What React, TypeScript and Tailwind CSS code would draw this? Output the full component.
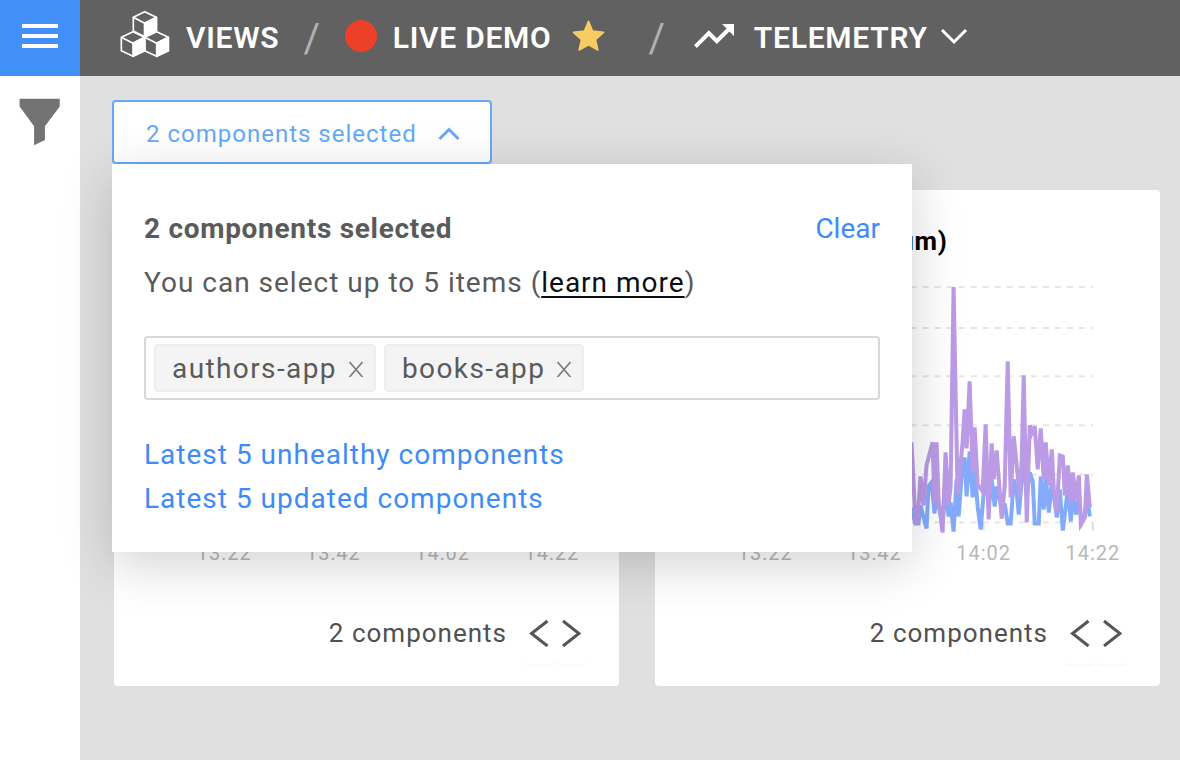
import { MdTrendingUp } from "react-icons/md";

const TAGS = ["authors-app", "books-app"];

const GRID_LINES = [18, 59, 107, 156, 205, 253];

const TICKS = [
  { x: 110, label: "13:22" },
  { x: 219, label: "13:42" },
  { x: 328, label: "14:02" },
  { x: 437, label: "14:22" },
];

const PURPLE =
  "44,240 52,205 60,248 70,190 80,236 92,176 100,250 112,200 124,246 136,184 148,230 160,204 172,250 186,190 200,240 214,196 228,246 240,182 250,230 256,173 260,253 262,253 265,207 268,236 271,196 277,173 279,235 281,173 283,230 287,263 290,183 293,236 295,217 298,18 302,225 307,173 309,140 311,179 314,112 317,203 319,158 322,215 327,222 330,155 333,250 336,174 338,210 341,181 346,249 349,217 352,92 355,228 358,167 361,196 364,228 366,190 368,106 371,253 374,156 376,164 379,157 382,200 385,159 388,210 390,173 393,216 396,180 398,220 401,243 404,186 407,187 409,226 412,196 415,233 417,203 420,230 423,206 425,255 429,248 431,205 434,238";

const BLUE =
  "44,250 60,240 76,252 92,236 108,253 124,238 140,250 156,230 172,253 188,240 204,250 220,236 236,252 250,230 256,240 260,254 263,254 265,236 271,259 273,217 276,213 279,244 281,213 283,237 287,253 290,217 293,247 295,233 298,262 301,210 303,247 306,207 309,188 311,227 314,182 317,228 319,198 322,237 325,260 330,200 333,237 336,210 339,237 341,217 347,243 349,234 352,254 355,254 358,210 361,223 363,245 366,213 368,180 371,227 374,203 377,212 379,254 383,254 385,207 388,240 390,207 393,243 396,213 399,233 401,248 404,220 407,261 412,220 415,252 417,220 420,245 423,230 426,253 429,247 431,227 434,247";

function Chart({ label }: { label: string }) {
  return (
    <svg viewBox="0 0 504 300" className="block w-full" role="img" aria-label={label}>
      {GRID_LINES.map((y) => (
        <line key={y} x1="44" x2="437" y1={y} y2={y} stroke="#e6e6e6" strokeWidth="2" strokeDasharray="6 6" strokeDashoffset="5" />
      ))}
      {TICKS.map((t) => (
        <line key={t.x} x1={t.x} x2={t.x} y1="253" y2="261" stroke="#dedede" strokeWidth="2" />
      ))}
      <polyline points={BLUE} fill="none" stroke="#84abfa" strokeWidth="4" />
      <polyline points={PURPLE} fill="none" stroke="#bb9ae6" strokeWidth="4" />
      {TICKS.map((t) => (
        <text key={t.x} x={t.x} y="290" textAnchor="middle" fill="#b8b8b8" className="text-[20px] tracking-wider">
          {t.label}
        </text>
      ))}
    </svg>
  );
}

function Card({ title }: { title?: string }) {
  return (
    <section className="flex flex-col rounded-sm bg-white">
      <h2 className="min-h-[70px] pt-8 pl-2 text-center text-[26px] leading-[38px] font-bold tracking-wide text-black">{title}</h2>
      <div className="mt-[9px]">
        <Chart label="Telemetry of the last hour" />
      </div>
      <div className="mt-8 flex items-center justify-end gap-4 px-8 pb-[22px]">
        <span className="text-[26px] leading-8 tracking-[1px] text-[#505050]">2 components</span>
        <div className="flex">
          <button type="button" aria-label="Previous" className="flex h-[62px] w-8 items-center justify-center rounded-md shadow-[0_2px_0_#fafafa]">
            <svg viewBox="0 0 20 28" className="h-7 w-5" fill="none" stroke="#555555" strokeWidth="3">
              <path d="M18.500 2L2.500 14.500L18.500 27" />
            </svg>
          </button>
          <button type="button" aria-label="Next" className="flex h-[62px] w-8 items-center justify-center rounded-md shadow-[0_2px_0_#fafafa]">
            <svg viewBox="0 0 20 28" className="h-7 w-5" fill="none" stroke="#555555" strokeWidth="3">
              <path d="M2 2L18 14.500L2 27" />
            </svg>
          </button>
        </div>
      </div>
    </section>
  );
}

function CubesIcon() {
  return (
    <svg viewBox="360 30 150 144" className="h-12 w-[50px]" fill="none" stroke="white" strokeWidth="5" strokeLinejoin="round">
      <path d="M434 35L469 52V93L434 110L400 93V52Z" />
      <path d="M400 52L434 70L469 52V93L434 110V70Z" />
      <path d="M434 70L469 52V93L434 110Z" fill="white" />
      <path d="M399 95L434 112V152L399 169L364 152V112Z" />
      <path d="M364 112L399 130L434 112" />
      <path d="M399 130L434 112V152L399 169Z" fill="white" />
      <path d="M470 95L505 112V152L470 169L434 152V112Z" />
      <path d="M434 112L470 130L505 112" />
      <path d="M470 130L505 112V152L470 169Z" fill="white" />
    </svg>
  );
}

function Slash() {
  return <span aria-hidden="true" className="block pt-[6px] text-[40px] leading-10 font-normal text-[#b0b0b0]">/</span>;
}

function Header() {
  return (
    <header className="flex h-[76px] items-stretch bg-[#616161] text-[30px] font-semibold tracking-wide text-white">
      <button type="button" aria-label="Menu" className="flex w-20 shrink-0 flex-col items-center justify-center gap-[6px] bg-[#4290f7] pb-1">
        <span className="h-1 w-9 bg-white" />
        <span className="h-1 w-9 bg-white" />
        <span className="h-1 w-9 bg-white" />
      </button>
      <nav className="flex items-center pb-1 pl-10 whitespace-nowrap">
        <a href="#views" className="flex items-center gap-4">
          <span className="pb-1"><CubesIcon /></span>
          <span className="pt-1 leading-9">VIEWS</span>
        </a>
        <span className="px-6"><Slash /></span>
        <a href="#live-demo" className="flex items-center">
          <span className="size-8 rounded-full bg-[#ed402b]" />
          <span className="pt-1 pl-4 leading-9">LIVE DEMO</span>
          <svg viewBox="844 58 98 96" className="ml-5 h-8 w-[33px]" fill="#f7cc62" stroke="#f7cc62" strokeWidth="5" strokeLinejoin="round">
            <path d="M893 62L905 91L938 95L914 117L921 148L893 132L865 148L872 117L848 95L881 91Z" />
          </svg>
        </a>
        <span className="pr-6 pl-11"><Slash /></span>
        <a href="#telemetry" className="flex items-center">
          <MdTrendingUp className="size-12" />
          <span className="pt-1 pl-4 leading-9">TELEMETRY</span>
          <svg viewBox="0 0 28 18" className="ml-3 h-[18px] w-7" fill="none" stroke="white" strokeWidth="3">
            <path d="M2 3L14 15L26 3" />
          </svg>
        </a>
      </nav>
    </header>
  );
}

function SelectionPanel() {
  return (
    <div className="absolute top-16 left-0 z-10 w-[800px] bg-white px-8 pt-[33px] pb-[31px] text-[28px] leading-[44px] tracking-[1px] text-[#5a5a5a] shadow-[0_12px_48px_rgba(0,0,0,0.18)]">
      <div className="flex h-16 items-center justify-between">
        <h1 className="font-bold tracking-wide">2 components selected</h1>
        <button type="button" className="tracking-normal text-[#3d8bf8]">Clear</button>
      </div>
      <p>
        You can select up to 5 items (
        <a href="#learn-more" className="text-[#0b0f14] underline decoration-2 underline-offset-4">learn more</a>)
      </p>
      <div className="mt-[31px] flex h-16 items-center gap-2 rounded-sm border-2 border-[#d8d8d8] px-2">
        {TAGS.map((tag) => (
          <span key={tag} className="flex h-12 items-center gap-[11px] rounded-sm border-2 border-[#eeeeee] bg-[#f4f4f4] pt-[2px] pr-[10px] pl-4 tracking-wider">
            {tag}
            <button type="button" aria-label={`Remove ${tag}`}>
              <svg viewBox="0 0 16 16" className="size-4" fill="none" stroke="#7c7c7c" strokeWidth="1.700">
                <path d="M1.500 1L14.500 16M14.500 1L1.500 16" />
              </svg>
            </button>
          </span>
        ))}
        <input type="text" aria-label="Add component" className="min-w-0 flex-1 outline-none" />
      </div>
      <div className="mt-[33px] flex flex-col items-start text-[#3d8bf8]">
        <a href="#unhealthy">Latest 5 unhealthy components</a>
        <a href="#updated">Latest 5 updated components</a>
      </div>
    </div>
  );
}

export default function App() {
  return (
    <div className="flex min-h-screen flex-col overflow-x-hidden font-[Roboto,sans-serif]">
      <Header />
      <div className="flex flex-1">
        <aside className="w-20 shrink-0 bg-white">
          <button type="button" aria-label="Filter" className="flex w-full justify-center pt-[22px]">
            <svg viewBox="57 294 126 146" className="h-12 w-[42px]" fill="#737373">
              <path d="M58 296H180V320L135 380V422L102 438V380L58 320Z" />
            </svg>
          </button>
        </aside>
        <main className="flex-1 bg-[#e0e0e0] pt-6">
          <div className="relative ml-8 w-[380px]">
            <button
              type="button"
              aria-expanded="true"
              className="flex h-16 w-full items-center justify-between rounded-sm border-2 border-[#65a9f8] bg-white pt-1 pr-[30px] pl-8 text-[24px] tracking-[1px] text-[#65a9f8]"
            >
              2 components selected
              <svg viewBox="0 0 22 14" className="h-[14px] w-[22px]" fill="none" stroke="#65a9f8" strokeWidth="3">
                <path d="M1.500 12L11 2.500L20.500 12" />
              </svg>
            </button>
            <SelectionPanel />
          </div>
          <div className="mt-[26px] grid grid-cols-2 gap-9 pr-5 pl-[34px]">
            <Card />
            <Card title="(sum)" />
          </div>
        </main>
      </div>
    </div>
  );
}
